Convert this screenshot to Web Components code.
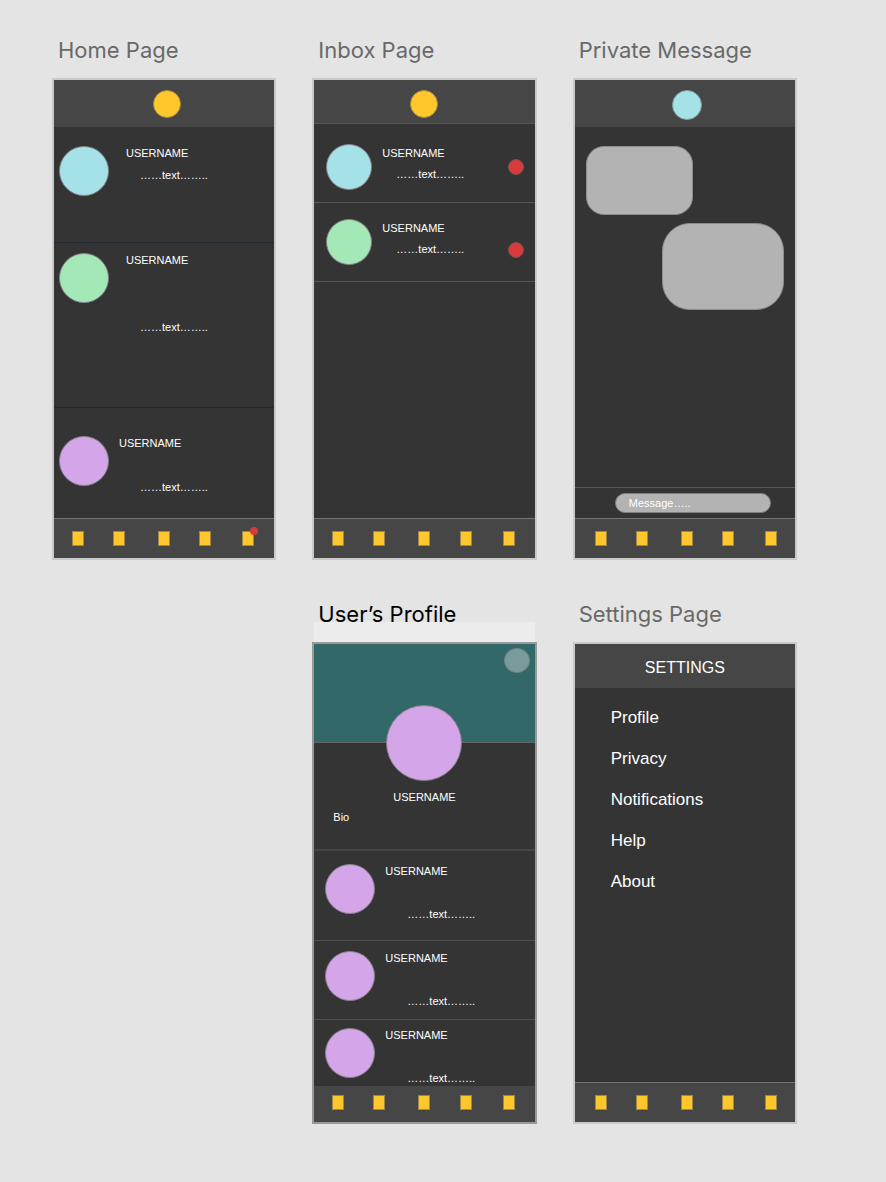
<!DOCTYPE html>
<html lang="en">
<head>
<meta charset="utf-8">
<meta name="viewport" content="width=device-width, initial-scale=1">
<title>Social app wireframes</title>
<style>
  body {
    margin: 0;
    background: #e4e4e4;
    font: 11px/14px "Liberation Sans", Arial, sans-serif;
    color: #fff;
  }
</style>
</head>
<body>
<design-board></design-board>

<template id="design-board">
  <style>
    :host { display: block; padding: 36px 89px 36px 52px; }
    main {
      display: grid;
      grid-template-columns: repeat(3, minmax(0, 1fr));
      gap: 40px 36px;
    }
    .col-2 { grid-column: 2; }
    .home { --row-line: #202b36; --row-left: 5px; --name-gap: 17px; --text-indent: 14px; }
    .home-1 { --row-height: 115px; --row-top: 19px; --text-gap: 8px; }
    .home-2 { --row-height: 164px; --row-top: 10px; --text-gap: 53px; }
    .home-3 { --row-top: 28px; --text-gap: 30px; --row-line: transparent; --name-gap: 10px; --text-indent: 21px; flex: 1; }
    .inbox {
      --avatar-size: 46px; --row-left: 12px; --name-gap: 10px; --name-top: 2px;
      --text-gap: 7px; --text-indent: 14px; --row-height: 78px; --row-line: #575757;
    }
    .inbox-1 { --row-top: 20px; --alert-top: 15px; }
    .inbox-2 { --row-top: 16px; --alert-top: 23px; }
    .post { --row-left: 11px; --name-gap: 10px; --text-gap: 29px; --text-indent: 22px; --row-line: #505050; }
    .post-1 { --row-height: 89px; --row-top: 13px; }
    .post-2 { --row-height: 78px; --row-top: 10px; }
    .post-3 { --row-height: 64px; --row-top: 8px; --row-line-width: 0; }
    .cyan { --avatar-color: #a5e2e8; }
    .green { --avatar-color: #a5e8b7; }
    .violet { --avatar-color: #d4a5e8; }
  </style>
  <main>
    <phone-screen>
      <span slot="title">Home Page</span>
      <top-bar class="tall"><round-mark></round-mark></top-bar>
      <user-row class="home home-1 cyan"><span slot="name">USERNAME</span>……text……..</user-row>
      <user-row class="home home-2 green"><span slot="name">USERNAME</span>……text……..</user-row>
      <user-row class="home home-3 violet"><span slot="name">USERNAME</span>……text……..</user-row>
      <tab-bar alert></tab-bar>
    </phone-screen>

    <phone-screen>
      <span slot="title">Inbox Page</span>
      <top-bar class="lined"><round-mark></round-mark></top-bar>
      <user-row unread class="inbox inbox-1 cyan"><span slot="name">USERNAME</span>……text……..</user-row>
      <user-row unread class="inbox inbox-2 green"><span slot="name">USERNAME</span>……text……..</user-row>
      <tab-bar></tab-bar>
    </phone-screen>

    <phone-screen>
      <span slot="title">Private Message</span>
      <top-bar class="tall"><round-mark class="contact"></round-mark></top-bar>
      <message-thread></message-thread>
      <tab-bar inset></tab-bar>
    </phone-screen>

    <phone-screen selected class="col-2">
      <span slot="title">User’s Profile</span>
      <profile-card class="violet"></profile-card>
      <user-row class="post post-1 violet"><span slot="name">USERNAME</span>……text……..</user-row>
      <user-row class="post post-2 violet"><span slot="name">USERNAME</span>……text……..</user-row>
      <user-row class="post post-3 violet"><span slot="name">USERNAME</span>……text……..</user-row>
      <tab-bar compact></tab-bar>
    </phone-screen>

    <phone-screen>
      <span slot="title">Settings Page</span>
      <top-bar>SETTINGS</top-bar>
      <settings-menu></settings-menu>
      <tab-bar inset></tab-bar>
    </phone-screen>
  </main>
</template>

<template id="phone-screen">
  <style>
    :host { display: flex; flex-direction: column; gap: 14px; min-width: 0; }
    h2 {
      margin: 0; padding-left: 6px;
      font: 400 22px/28px Inter, "Liberation Sans", sans-serif;
      color: #696969; white-space: nowrap;
    }
    section {
      position: relative; display: flex; flex-direction: column;
      min-height: 478px; border: 2px solid #c9c9c9; background: #343434;
    }
    :host([selected]) h2 { color: #000; }
    :host([selected]) section { border-color: #999; }
    :host([selected]) section::before {
      content: ""; position: absolute; inset: -22px 0 auto; height: 20px;
      background: #ececec;
    }
  </style>
  <h2><slot name="title"></slot></h2>
  <section><slot></slot></section>
</template>

<template id="top-bar">
  <style>
    :host {
      display: flex; justify-content: center; align-items: flex-start;
      box-sizing: border-box; min-height: 44px; padding-top: 10px;
      background: #464646; font-size: 16px; line-height: 28px;
    }
    :host(.tall) { min-height: 47px; padding-left: 5px; }
    :host(.lined) { border-bottom: 1px solid #555; }
  </style>
  <slot></slot>
</template>

<template id="round-mark">
  <style>
    :host {
      display: block; box-sizing: border-box; width: 28px; height: 28px;
      border: 1px solid #a88c45; border-radius: 50%; background: #ffc72c;
    }
    :host(.contact) { width: 30px; height: 30px; border-color: #7d9da0; background: #a5e2e8; }
  </style>
</template>

<template id="user-row">
  <style>
    :host {
      display: flex; align-items: flex-start;
      border-bottom: var(--row-line-width, 1px) solid var(--row-line);
    }
    article {
      flex: 1; display: flex; align-items: flex-start; box-sizing: border-box;
      min-height: var(--row-height, 0); padding: var(--row-top) 11px 0 var(--row-left);
    }
    .avatar {
      flex: none; box-sizing: border-box;
      width: var(--avatar-size, 50px); height: var(--avatar-size, 50px);
      border: 1px solid #85808a; border-radius: 50%; background: var(--avatar-color);
    }
    .copy { flex: 1; padding: var(--name-top, 0) 0 0 var(--name-gap); white-space: nowrap; }
    p { margin: 0; }
    p + p { margin: var(--text-gap) 0 0 var(--text-indent); }
    .alert {
      display: none; box-sizing: border-box; width: 16px; height: 16px;
      margin-top: var(--alert-top, 0);
      border: 1px solid #7c5050; border-radius: 50%; background: #d93a3a;
    }
    :host([unread]) .alert { display: block; }
  </style>
  <article>
    <div class="avatar"></div>
    <div class="copy"><p><slot name="name"></slot></p><p><slot></slot></p></div>
    <div class="alert"></div>
  </article>
</template>

<template id="tab-bar">
  <style>
    :host { display: block; margin-top: auto; }
    nav {
      display: grid; grid-template-columns: 41fr 45fr 41fr 43fr 12px;
      padding: 12px 20px 12px 18px; border-top: 1px solid #747474; background: #464646;
    }
    :host([inset]) nav { padding-left: 20px; padding-right: 18px; }
    :host([compact]) nav { padding-top: 9px; border-top: 0; }
    button {
      position: relative; box-sizing: border-box; width: 12px; height: 15px;
      margin: 0; padding: 0; border: 1px solid #a08648; background: #ffc72c;
    }
    :host([alert]) button:last-child::after {
      content: ""; position: absolute; top: -5px; right: -5px;
      width: 8px; height: 8px; border-radius: 50%; background: #d13c3c;
    }
  </style>
  <nav>
    <button type="button" aria-label="Home"></button>
    <button type="button" aria-label="Search"></button>
    <button type="button" aria-label="New post"></button>
    <button type="button" aria-label="Profile"></button>
    <button type="button" aria-label="Inbox"></button>
  </nav>
</template>

<template id="message-thread">
  <style>
    :host { flex: 1; display: flex; flex-direction: column; }
    .thread {
      flex: 1; display: flex; flex-direction: column; align-items: flex-start;
      gap: 8px; padding: 19px 11px 0;
    }
    .bubble {
      box-sizing: border-box; width: 107px; height: 69px;
      border: 1px solid #8c8c8c; border-radius: 18px; background: #b3b3b3;
    }
    .sent { align-self: flex-end; width: 122px; height: 87px; border-radius: 28px; }
    form { display: flex; justify-content: center; padding: 5px 0 5px 16px; border-top: 1px solid #585858; }
    input {
      box-sizing: border-box; width: 156px; height: 20px; margin: 0; padding: 0 13px;
      border: 1px solid #808080; border-radius: 10px; background: #b3b3b3;
      font: inherit; color: #fff; outline: none;
    }
    input::placeholder { color: #fff; opacity: 1; }
  </style>
  <div class="thread"><div class="bubble"></div><div class="bubble sent"></div></div>
  <form><input type="text" aria-label="Message" placeholder="Message….."></form>
</template>

<template id="profile-card">
  <style>
    :host { display: flex; flex-direction: column; padding-bottom: 25px; border-bottom: 2px solid #464646; }
    .cover {
      display: flex; justify-content: flex-end; align-items: flex-start;
      box-sizing: border-box; height: 99px; padding: 4px 5px;
      border-bottom: 1px solid #666; background: #336869;
    }
    button {
      box-sizing: border-box; width: 26px; height: 25px; margin: 0; padding: 0;
      border: 1px solid #6f8080; border-radius: 50%; background: #7a9b9b;
    }
    .avatar {
      align-self: center; box-sizing: border-box; width: 76px; height: 76px; margin-top: -38px;
      border: 1px solid #85808a; border-radius: 50%; background: var(--avatar-color);
    }
    p { margin: 6px 19px 0; }
    .name { margin-top: 9px; text-align: center; }
  </style>
  <div class="cover"><button type="button" aria-label="Settings"></button></div>
  <div class="avatar"></div>
  <p class="name">USERNAME</p>
  <p>Bio</p>
</template>

<template id="settings-menu">
  <style>
    :host { display: block; padding: 9px 36px 0; }
    ul { margin: 0; padding: 0; list-style: none; font-size: 17px; line-height: 41px; }
    a { color: inherit; text-decoration: none; }
  </style>
  <ul>
    <li><a href="#profile">Profile</a></li>
    <li><a href="#privacy">Privacy</a></li>
    <li><a href="#notifications">Notifications</a></li>
    <li><a href="#help">Help</a></li>
    <li><a href="#about">About</a></li>
  </ul>
</template>

<script>
  class TemplateElement extends HTMLElement {
    constructor() {
      super();
      const template = document.getElementById(this.localName);
      this.attachShadow({ mode: "open" }).append(template.content.cloneNode(true));
    }
  }
  class PhoneScreen extends TemplateElement {}
  class TopBar extends TemplateElement {}
  class RoundMark extends TemplateElement {}
  class UserRow extends TemplateElement {}
  class TabBar extends TemplateElement {}
  class MessageThread extends TemplateElement {}
  class ProfileCard extends TemplateElement {}
  class SettingsMenu extends TemplateElement {}
  class DesignBoard extends TemplateElement {}

  customElements.define("phone-screen", PhoneScreen);
  customElements.define("top-bar", TopBar);
  customElements.define("round-mark", RoundMark);
  customElements.define("user-row", UserRow);
  customElements.define("tab-bar", TabBar);
  customElements.define("message-thread", MessageThread);
  customElements.define("profile-card", ProfileCard);
  customElements.define("settings-menu", SettingsMenu);
  customElements.define("design-board", DesignBoard);
</script>
</body>
</html>
